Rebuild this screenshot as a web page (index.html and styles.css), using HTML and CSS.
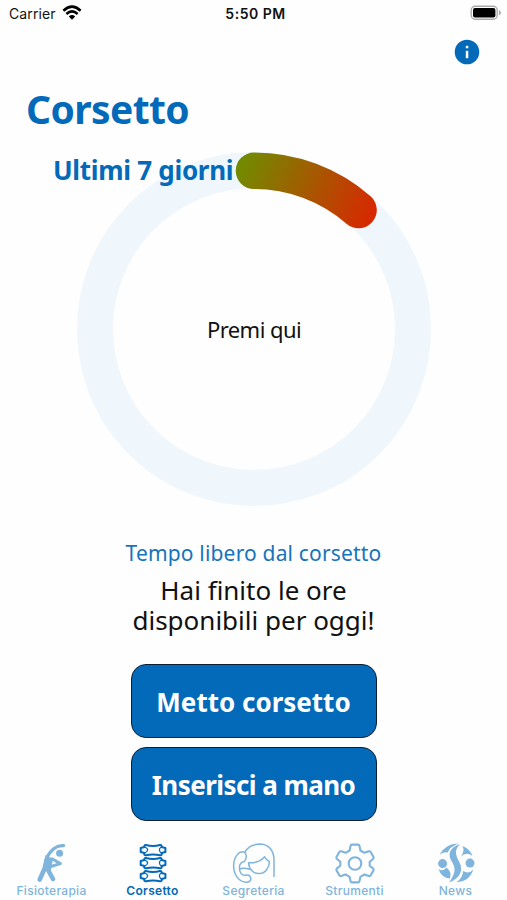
FILE: index.html
```html
<!DOCTYPE html>
<html lang="it">
<head>
<meta charset="utf-8">
<title>Corsetto</title>
<link rel="stylesheet" href="styles.css">
</head>
<body>
<div class="screen">
  <header class="status">
    <div class="carrier"><span>Carrier</span>
      <svg width="20" height="16" viewBox="0 0 20 16"><g fill="none" stroke="#000" stroke-width="2.6"><path d="M1.4 5.7Q10-2.3 18.6 5.7"/><path d="M4.4 9Q10 3.8 15.6 9"/></g><path d="M6.8 11.4Q10 8.6 13.2 11.4L10 14.8Z"/></svg>
    </div>
    <div class="clock">5:50 PM</div>
    <svg class="battery" width="32" height="16" viewBox="0 0 32 16"><rect x="1.2" y="1.2" width="26" height="13" rx="4" fill="#fff" stroke="#aaa" stroke-width="1.4"/><rect x="3" y="3" width="22.4" height="9.4" rx="2" fill="#000"/><path d="M29 5.2Q31 6 31 7.7T29 10.2Z" fill="#aaa"/></svg>
  </header>
  <div class="toolbar">
    <svg width="26" height="26" viewBox="0 0 26 26"><circle cx="13" cy="13" r="12.3" fill="#0369b9"/><rect x="11.8" y="6.8" width="2.5" height="2.5" fill="#fff"/><rect x="11.8" y="11.8" width="2.5" height="7.4" fill="#fff"/></svg>
  </div>
  <h1>Corsetto</h1>
  <section class="dial">
    <svg width="354" height="354" viewBox="0 0 354 354">
      <defs><linearGradient id="heat" gradientUnits="userSpaceOnUse" x1="165" y1="10" x2="293" y2="70"><stop offset="0" stop-color="#728b00"/><stop offset="1" stop-color="#d82800"/></linearGradient></defs>
      <circle cx="177" cy="177" r="159" fill="none" stroke="#eff6fc" stroke-width="36"/>
      <path d="M177 18.8A158.5 158.5 0 0 1 281.5 58" fill="none" stroke="url(#heat)" stroke-width="36.6" stroke-linecap="round"/>
    </svg>
    <h2>Ultimi 7 giorni</h2>
    <p class="press">Premi qui</p>
  </section>
  <p class="caption">Tempo libero dal corsetto</p>
  <div class="message"><p>Hai finito le ore</p><p>disponibili per oggi!</p></div>
  <div class="actions">
    <button>Metto corsetto</button>
    <button class="manual">Inserisci a mano</button>
  </div>
  <nav class="tabs">
    <a><svg width="44" height="44" viewBox="0 0 44 44"><g fill="none" stroke="currentColor" stroke-linecap="round" stroke-linejoin="round"><path d="M33.6 4.7C27 4 20.5 9 16.5 17.5" stroke-width="3.2"/><path d="M16.5 19L14.8 27 9.7 38.6M17.5 28L23 38" stroke-width="4.6"/><path d="M22 17.8L30.4 22.6 20 25.8" stroke-width="3"/></g><path d="M15.5 14L23 18 20.5 31 13 28Z" fill="currentColor"/><circle cx="29.6" cy="12.3" r="3.5" fill="currentColor"/></svg><span>Fisioterapia</span></a>
    <a class="on"><svg width="44" height="44" viewBox="0 0 44 44"><g fill="none" stroke="currentColor" stroke-width="2" stroke-linejoin="round"><path id="v" d="M15 4Q22 6 29 4Q31 3.8 30.5 6L34.4 7V11L30.5 12Q31.5 14.4 29 14.2Q22 12.6 15 14.2Q12.5 14.4 13.5 12L9.7 11V7L13.5 6Q13 3.8 15 4Z"/><path id="w" d="M13.5 6Q16.8 7 16.6 9T13.5 12M30.5 6Q28.2 7 28.4 9T30.5 12" stroke-width="1.3"/><use href="#v" y="13"/><use href="#w" y="13"/><use href="#v" y="26"/><use href="#w" y="26"/></g></svg><span>Corsetto</span></a>
    <a><svg width="44" height="44" viewBox="0 0 44 44"><g fill="none" stroke="currentColor" stroke-width="1.5" stroke-linejoin="round" stroke-linecap="round"><path d="M12.6 11.3C7 9 1.8 16 1.6 24.5C1.5 33.5 7 41.6 15 41.2Q19.6 40.6 18.6 36.4Q17.5 33.2 13.8 34.2C9.5 35 7.4 31 7.4 26.5C7.6 22.5 9.3 21 12.4 20.6Q14.6 18 14.2 14.5Q13.8 12 12.6 11.3ZM12.6 11.3C16 5.5 22 3 28.5 3C37.5 3.2 42 11 42 19V35.5"/><path d="M16.6 21.7Q27 22.5 32.6 15.8Q34 19 37.4 20.6C37.5 27 33 32.6 27 32.6C21 32.6 16.8 28 16.6 21.7Z"/><path d="M7.6 28.2C11 26.2 15 27.5 17.6 28.2"/></g></svg><span>Segreteria</span></a>
    <a><svg width="44" height="44" viewBox="0 0 44 44"><g fill="none" stroke="currentColor" stroke-width="2.1" stroke-linejoin="round"><path d="M19 3.6H25Q26.2 3.6 26.5 5L27.4 9.5L31.4 11.8L35.8 10.3Q37 10 37.7 11L40.5 16Q41 17.2 40 18L36.7 20.8V24.8L40 27.4Q41 28.2 40.5 29.4L37.7 34.2Q37 35.4 35.8 35L31.4 33.4L27.4 35.8L26.5 40Q26.2 41.4 25 41.4H19Q17.8 41.4 17.5 40L16.6 35.8L12.6 33.4L8.2 35Q7 35.4 6.3 34.2L3.5 29.4Q3 28.2 4 27.4L7.3 24.8V20.8L4 18Q3 17.2 3.5 16L6.3 11Q7 10 8.2 10.3L12.6 11.8L16.6 9.5L17.5 5Q17.8 3.6 19 3.6Z"/><circle cx="22" cy="22.5" r="6.3"/></g></svg><span>Strumenti</span></a>
    <a><svg width="44" height="44" viewBox="0 0 44 44"><g fill="currentColor"><path d="M26 3.2C16 6 13.5 13 17.2 19.5C21 26 23 30 15.2 41.5C26.5 37 29.5 29 25.5 21.5C21.5 14 20 9 26 3.2Z"/><path d="M5.5 14Q11 2.5 24.5 2.5Q15.5 6 13.8 11.5Q9 10.5 5.5 14ZM28.5 5Q36 8 38.5 15Q32.5 10.5 27 15.5Q31 10 28.5 5Z"/><circle cx="8.6" cy="22.6" r="4.5"/><circle cx="36" cy="22.1" r="4.5"/><path d="M4.5 28Q9 31 12.5 26.5Q18 31 16 37.5Q7.5 37 4.5 28ZM39.4 28.5Q35 41 22.5 41Q29 37 29 30Q35 33.5 39.4 28.5Z"/></g></svg><span>News</span></a>
  </nav>
</div>
</body>
</html>
```
FILE: styles.css
```css
* { box-sizing: border-box; }
body { margin: 0; background: #fefefe; font-family: "Noto Sans", sans-serif; color: #111; }
h1, h2, p { margin: 0; }
.screen { width: 507px; height: 900px; display: flex; flex-direction: column; overflow: hidden; }
.status { height: 28px; display: grid; grid-template-columns: 1fr auto 1fr; align-items: center; padding: 0 5px 2px 9px; font-family: Inter, sans-serif; }
.carrier { display: flex; align-items: center; gap: 6px; font-size: 14px; letter-spacing: .1px; }
.clock { font-size: 14px; font-weight: 600; letter-spacing: .5px; }
.battery { justify-self: end; }
.toolbar { height: 51px; padding: 11px 27px 0 0; text-align: right; }
h1 { height: 60px; line-height: 60px; padding-left: 26px; font-size: 39px; letter-spacing: -.6px; color: #0369b9; white-space: nowrap; }
.dial { position: relative; width: 354px; height: 354px; margin: 13px 0 0 77px; display: grid; place-items: center; }
.dial > * { grid-area: 1 / 1; }
h2 { position: absolute; left: -24px; top: 0; line-height: 37px; font-size: 26px; letter-spacing: -.3px; color: #0369b9; white-space: nowrap; }
.press { position: relative; font-size: 22px; line-height: 30px; letter-spacing: -.55px; }
.caption { margin-top: 32px; text-align: center; font-size: 21px; line-height: 30px; letter-spacing: .17px; color: #1673bd; white-space: nowrap; }
.message { margin-top: 7px; text-align: center; font-size: 26px; line-height: 30px; white-space: nowrap; }
.actions { margin-top: 29px; display: flex; flex-direction: column; align-items: center; gap: 9px; }
button { width: 246px; height: 74px; border: 1.5px solid #0b2035; border-radius: 15px; background: #0369b9; color: #fff; font: bold 26px "Noto Sans", sans-serif; padding: 2px 0 0; white-space: nowrap; }
.manual { letter-spacing: -.56px; }
.tabs { margin-top: 20px; display: grid; grid-template-columns: repeat(5, 101px); padding-left: 1px; }
.tabs a { display: flex; flex-direction: column; align-items: center; color: #7fb4dd; font: 500 12px/14px Inter, sans-serif; letter-spacing: .3px; }
.tabs span { margin-top: -1px; }
.tabs .on { color: #0369b9; font-weight: 600; }
```
